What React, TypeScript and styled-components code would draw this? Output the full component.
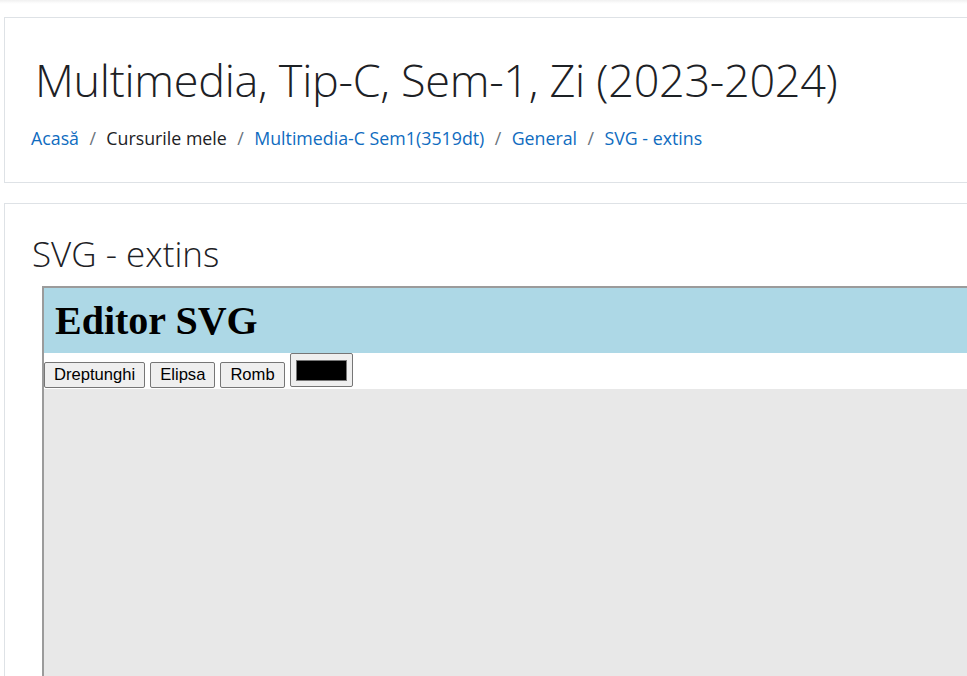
import React from 'react';
import styled, { createGlobalStyle } from 'styled-components';

const GlobalStyle = createGlobalStyle`
  html, body {
    margin: 0;
    padding: 0;
    background: #fff;
    overflow: hidden;
  }
  body {
    font-family: 'Open Sans', 'Noto Sans', sans-serif;
    color: #1d2125;
  }
`;

const TopShadow = styled.div`
  height: 4px;
  background: linear-gradient(#f0f0f0, #fafafa 60%, #fff);
`;

const Page = styled.div`
  padding: 13px 0 0 4px;
  display: flex;
  flex-direction: column;
  gap: 20px;
  width: 1200px;
`;

const Card = styled.section<{ $height?: number }>`
  border: 1px solid #dee2e6;
  background: #fff;
  padding: 0 0 0 26px;
  height: ${p => (p.$height ? `${p.$height}px` : 'auto')};
  box-sizing: border-box;
`;

const Title = styled.h1`
  margin: 34px 0 0 4px;
  font-weight: 300;
  font-size: 45px;
  line-height: 56px;
  color: #1d2125;
  letter-spacing: -0.3px;
`;

const Crumbs = styled.nav`
  margin-top: 17px;
  display: flex;
  align-items: center;
  font-size: 17.8px;
  line-height: 26px;
`;

const Crumb = styled.span<{ $link?: boolean }>`
  color: ${p => (p.$link ? '#0f6cbf' : '#1d2125')};
`;

const Sep = styled.span`
  color: #6a737b;
  padding: 0 10.4px;
`;

const SectionTitle = styled.h2`
  margin: 27px 0 0 1px;
  font-weight: 300;
  font-size: 35px;
  line-height: 46px;
  color: #1d2125;
`;

const Editor = styled.div`
  margin: 9px 0 0 11px;
  border-top: 2px solid #9b9b9b;
  border-left: 2px solid #9b9b9b;
  height: 420px;
  display: flex;
  flex-direction: column;
`;

const EditorHeader = styled.header`
  background: #add8e6;
  height: 65px;
  display: flex;
  align-items: center;
  padding-left: 11px;
`;

const EditorTitle = styled.h1`
  margin: 0;
  font-family: 'Liberation Serif', 'Times New Roman', serif;
  font-weight: 700;
  font-size: 40px;
  color: #000;
`;

const Toolbar = styled.div`
  height: 36px;
  background: #fff;
  display: flex;
  align-items: flex-end;
  gap: 5px;
  padding-bottom: 1px;
  box-sizing: border-box;
`;

const ToolButton = styled.button`
  font-family: 'Liberation Sans', Arial, sans-serif;
  font-size: 16.6px;
  height: 26px;
  padding: 0 9px;
  background: #efefef;
  border: 1px solid #767676;
  border-radius: 2px;
  color: #000;
  cursor: pointer;
`;

const ColorButton = styled.button`
  width: 63px;
  height: 34px;
  padding: 0;
  margin-bottom: 1px;
  background: #efefef;
  border: 1px solid #767676;
  border-radius: 2px;
  display: flex;
  align-items: center;
  justify-content: center;
`;

const Swatch = styled.span<{ $color: string }>`
  width: 51px;
  height: 21px;
  box-sizing: border-box;
  border: 1px solid #777;
  background: ${p => p.$color};
`;

const Canvas = styled.div`
  flex: 1;
  background: #e8e8e8;
`;

export default function App() {
  const crumbs: { label: string; link: boolean }[] = [
    { label: 'Acasă', link: true },
    { label: 'Cursurile mele', link: false },
    { label: 'Multimedia-C Sem1(3519dt)', link: true },
    { label: 'General', link: true },
    { label: 'SVG - extins', link: true },
  ];

  return (
    <>
      <GlobalStyle />
      <TopShadow />
      <Page>
        <Card $height={166}>
          <Title>Multimedia, Tip-C, Sem-1, Zi (2023-2024)</Title>
          <Crumbs>
            {crumbs.map((c, i) => (
              <React.Fragment key={c.label}>
                {i > 0 && <Sep>/</Sep>}
                <Crumb $link={c.link}>{c.label}</Crumb>
              </React.Fragment>
            ))}
          </Crumbs>
        </Card>
        <Card>
          <SectionTitle>SVG - extins</SectionTitle>
          <Editor>
            <EditorHeader>
              <EditorTitle>Editor SVG</EditorTitle>
            </EditorHeader>
            <Toolbar>
              <ToolButton>Dreptunghi</ToolButton>
              <ToolButton>Elipsa</ToolButton>
              <ToolButton>Romb</ToolButton>
              <ColorButton>
                <Swatch $color="#000" />
              </ColorButton>
            </Toolbar>
            <Canvas />
          </Editor>
        </Card>
      </Page>
    </>
  );
}
